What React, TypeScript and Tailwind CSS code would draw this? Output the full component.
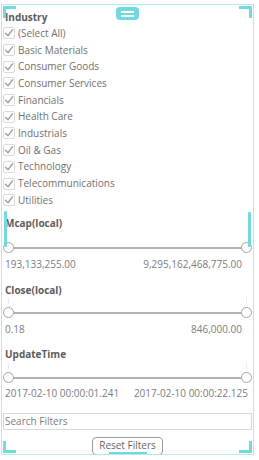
import React from 'react';

const industries = [
  '(Select All)',
  'Basic Materials',
  'Consumer Goods',
  'Consumer Services',
  'Financials',
  'Health Care',
  'Industrials',
  'Oil & Gas',
  'Technology',
  'Telecommunications',
  'Utilities',
];

const CheckBox: React.FC = () => (
  <span className="flex h-[12px] w-[12px] shrink-0 items-center justify-center rounded-[2px] border border-[#dadada] bg-white">
    <svg width="10" height="10" viewBox="0 0 10 10" fill="none">
      <path d="M1.5 5.2 L4 7.8 L8.6 1.8" stroke="#a3a3a3" strokeWidth="1.4" strokeLinecap="round" strokeLinejoin="round" />
    </svg>
  </span>
);

const Title: React.FC<{ label: string; className?: string }> = ({ label, className }) => (
  <div className={`h-[14px] pl-[2px] text-[10px] font-bold leading-[14px] text-[#5c5c5c] ${className ?? ''}`}>{label}</div>
);

const Slider: React.FC<{ className?: string; ticks?: boolean }> = ({ className, ticks }) => (
  <div className={`relative flex h-[16px] items-center ${className ?? ''}`}>
    <div className="absolute left-[5px] right-[5px] top-[7px] h-[2px] bg-[#b3b3b3]" />
    {ticks && <div className="absolute left-[5px] top-[-7px] h-[6px] w-px bg-[#ececec]" />}
    {ticks && <div className="absolute right-[5px] top-[-7px] h-[6px] w-px bg-[#ececec]" />}
    <div className="relative flex w-full justify-between">
      <span className="h-[11px] w-[11px] rounded-full border-[1.5px] border-[#a3a3a3] bg-white" />
      <span className="h-[11px] w-[11px] rounded-full border-[1.5px] border-[#a3a3a3] bg-white" />
    </div>
  </div>
);

const Values: React.FC<{ min: string; max: string; className?: string; right?: string }> = ({ min, max, className, right }) => (
  <div className={`flex h-[14px] justify-between pl-[2px] text-[10px] leading-[14px] text-[#7c7c7c] ${right ?? 'pr-[10px]'} ${className ?? ''}`}>
    <span>{min}</span>
    <span>{max}</span>
  </div>
);

const Bracket: React.FC<{ flip?: string }> = ({ flip }) => (
  <svg width="13" height="12" viewBox="0 0 13 12" className={flip}>
    <path d="M0 0 H13 V3 H3 V12 H0 Z" fill="#74d8e0" />
  </svg>
);

const SelectionFrame: React.FC = () => (
  <div className="pointer-events-none absolute left-[1px] top-[4px] flex h-[451px] w-[253px] flex-col border border-[#b2eaee] p-[1px]">
    <div className="flex items-start justify-between">
      <Bracket />
      <div className="mt-[1px] flex h-[13px] w-[23px] flex-col items-center justify-center gap-[2px] rounded-[4px] bg-[#74d8e0]">
        <span className="h-[2px] w-[13px] bg-white" />
        <span className="h-[2px] w-[13px] bg-white" />
      </div>
      <Bracket flip="-scale-x-100" />
    </div>
    <div className="mt-[191px] flex h-[36px] justify-between px-[1px]">
      <span className="w-[3px] rounded-[1px] bg-[#74d8e0]" />
      <span className="mt-[1px] w-[3px] rounded-[1px] bg-[#74d8e0]" />
    </div>
    <div className="mt-auto flex items-end justify-between">
      <Bracket flip="-scale-y-100" />
      <span className="mb-[-1px] h-[2px] w-[38px] bg-[#74d8e0]" />
      <Bracket flip="-scale-100" />
    </div>
  </div>
);

export default function App() {
  return (
    <div className="relative h-[460px] w-[259px] overflow-hidden bg-white" style={{ fontFamily: '"Open Sans", "Liberation Sans", sans-serif' }}>
      <div className="w-[255px] px-[3px] pt-[10px]">
        <Title label="Industry" />
        <div className="mt-[1px]">
          {industries.map((name) => (
            <div key={name} className="flex h-[16.7px] items-center gap-[3px] text-[10px] text-[#707070]">
              <CheckBox />
              <span>{name}</span>
            </div>
          ))}
        </div>

        <Title label="Mcap(local)" className="mt-[7px]" />
        <Slider className="mt-[10px]" />
        <Values min="193,133,255.00" max="9,295,162,468,775.00" className="mt-[1px]" />

        <Title label="Close(local)" className="mt-[12px]" />
        <Slider className="mt-[8px]" ticks />
        <Values min="0.18" max="846,000.00" className="mt-[1px]" />

        <Title label="UpdateTime" className="mt-[11px]" />
        <Slider className="mt-[9px]" ticks />
        <Values min="2017-02-10 00:00:01.241" max="2017-02-10 00:00:22.125" right="pr-[4px]" />

        <div className="mt-[13px] flex h-[17px] items-center border border-[#d9d9d9] pl-[1px] text-[10px] text-[#7c7c7c]">
          Search Filters
        </div>
        <div className="mt-[7px] flex justify-center">
          <button className="h-[18px] rounded-[4px] border border-[#9a9a9a] bg-white px-[6px] text-[10px] leading-[15px] text-[#666]">
            Reset Filters
          </button>
        </div>
      </div>

      <SelectionFrame />
    </div>
  );
}
